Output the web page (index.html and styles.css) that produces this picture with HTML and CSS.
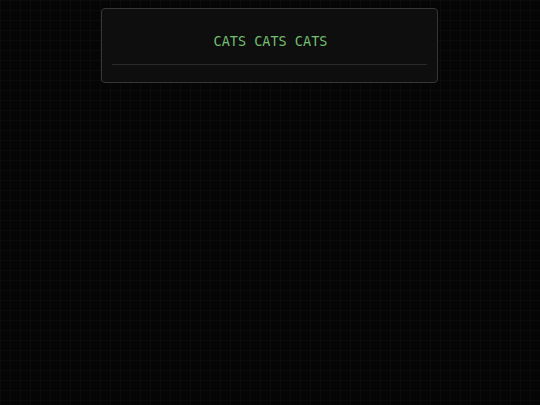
FILE: index.html
```html
<!DOCTYPE html>
<html>
	<head>
		<meta charset="UTF-8">
		<title>cats</title>
		<link rel="stylesheet" href="styles.css">
	</head>
	<body>
		<div class="panel">
			<h1 class="title">CATS CATS CATS</h1>
			<div class="rule"></div>
		</div>
	</body>
</html>
```

FILE: styles.css
```css
*{
	margin: 0;
	padding: 0;
	box-sizing: border-box;
}
html,body{
	height: 100%;
}
body{
	background-color: #050505;
	background-image:
		linear-gradient(rgba(255,255,255,0.025) 1px, transparent 1px),
		linear-gradient(90deg, rgba(255,255,255,0.025) 1px, transparent 1px);
	background-size: 10px 10px;
	padding-top: 8px;
	font-family: "DejaVu Sans Mono", monospace;
}
.panel{
	width: 337px;
	margin-left: 101px;
	background: #0e0e0e;
	border: 1px solid #363636;
	border-radius: 4px;
	padding: 22px 10px 17px;
}
.title{
	color: #74bd72;
	font-size: 13.5px;
	font-weight: normal;
	line-height: 20px;
	text-align: center;
	padding-left: 2px;
}
.rule{
	margin-top: 13px;
	height: 1px;
	background: #2a2a2a;
}
```
